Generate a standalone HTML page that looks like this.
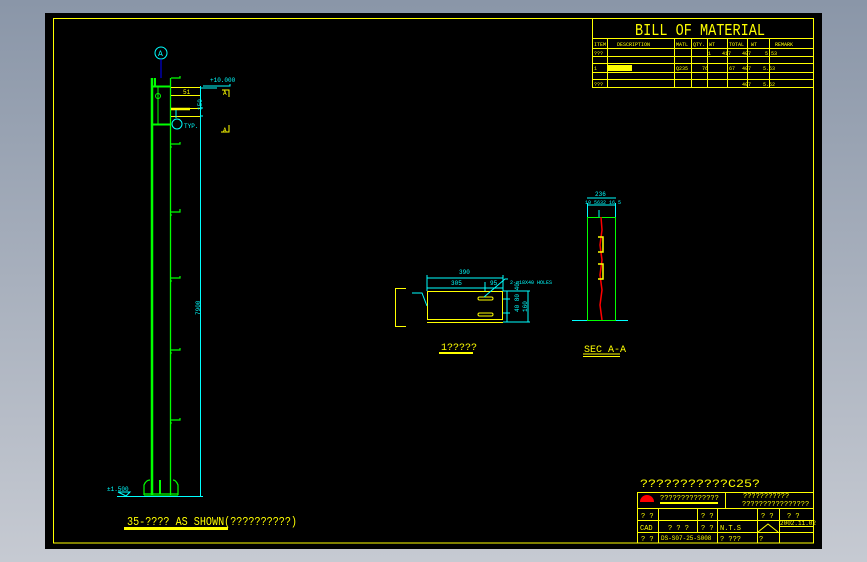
<!DOCTYPE html>
<html><head><meta charset="utf-8"><style>
html,body{margin:0;padding:0;width:867px;height:562px;overflow:hidden;background:linear-gradient(#8a96a8,#c6cad2);}
svg{position:absolute;left:0;top:0}
text{font-family:"Liberation Mono",monospace;}
</style></head><body>
<svg width="867" height="562" viewBox="0 0 867 562">
<rect x="45" y="13" width="777" height="536" fill="#000"/>
<rect x="53.5" y="18.5" width="760" height="524.5" fill="none" stroke="#ff0" stroke-width="1"/>

<!-- BOM -->
<g stroke="#ff0" stroke-width="1" fill="none">
<rect x="592.5" y="18.5" width="221" height="69"/>
<line x1="592" y1="38.5" x2="813" y2="38.5"/>
<line x1="592" y1="48.5" x2="813" y2="48.5"/>
<line x1="592" y1="56.5" x2="813" y2="56.5"/>
<line x1="592" y1="63.5" x2="813" y2="63.5"/>
<line x1="592" y1="72.5" x2="813" y2="72.5"/>
<line x1="592" y1="79.5" x2="813" y2="79.5"/>
<path d="M607.5 38V88M674.5 38V88M691.5 38V88M707.5 38V88M727.5 38V88M747.5 38V88M769.5 38V88"/>
</g>
<g fill="#ff0" font-size="5">
<text x="635" y="35" font-size="17" font-family="Liberation Sans" textLength="130" lengthAdjust="spacingAndGlyphs">BILL OF MATERIAL</text>
<text x="594" y="46">ITEM</text><text x="617" y="46">DESCRIPTION</text><text x="676" y="46">MATL</text><text x="693" y="46">QTY.</text>
<text x="709" y="46">WT</text><text x="729" y="46">TOTAL</text><text x="751" y="46">WT</text><text x="775" y="46">REMARK</text>
<text x="594" y="55">???</text><text x="708" y="55">1</text><text x="722" y="55">417</text><text x="742" y="55">407</text><text x="765" y="55">5.53</text>
<rect x="608" y="65" width="24" height="6"/>
<text x="594" y="70">1</text><text x="676" y="70">Q235</text><text x="702" y="70">76</text><text x="729" y="70">67</text><text x="742" y="70">407</text><text x="763" y="70">5.53</text>
<text x="594" y="86">???</text><text x="742" y="86">407</text><text x="763" y="86">5.52</text>
</g>

<!-- Column -->
<g fill="none">
<line x1="152" y1="78" x2="152" y2="495" stroke="#0f0" stroke-width="2.5"/>
<line x1="155" y1="78" x2="155" y2="86" stroke="#0f0" stroke-width="2"/>
<line x1="170.5" y1="78" x2="170.5" y2="495" stroke="#0f0" stroke-width="1.3"/>
<line x1="152" y1="86.5" x2="171" y2="86.5" stroke="#0f0" stroke-width="2"/>
<line x1="152" y1="124.5" x2="171" y2="124.5" stroke="#0f0" stroke-width="2"/>
<line x1="158" y1="86" x2="158" y2="124" stroke="#0f0" stroke-width="1"/>
<circle cx="158" cy="96" r="2.5" stroke="#0f0"/>
<path d="M171 78H180V76M171 144H180V142M171 212H180V209M171 278H180V276M171 350H180V348M171 420H180V418M171 146V148M171 214V216M171 280V282M171 352V354M171 422V424" stroke="#0f0" stroke-width="1.2"/>
<line x1="200.5" y1="86" x2="200.5" y2="497" stroke="#0ff" stroke-width="1"/>
<path d="M171 87.5H200M171 95.5H200M171 108.5H200M171 116.5H200" stroke="#ff0" stroke-width="1"/>
<line x1="171" y1="109" x2="190" y2="109" stroke="#ff0" stroke-width="2.5"/>
<path d="M200 88H217M200 108H203M200 116H203M203 86H230V84M176 110V118" stroke="#0ff" stroke-width="1"/>
<circle cx="161" cy="53" r="6" stroke="#0ff"/>
<line x1="161" y1="59" x2="161" y2="78" stroke="#00f" stroke-width="1"/>
<circle cx="177" cy="124" r="5" stroke="#0ff"/>
<path d="M222 90H229V97M224 132H229V125M221 132H227" stroke="#ff0"/>
<path d="M144 495V485Q146 480 150 480M178 495V485Q176 480 173 480M144 494H178M144 496H178" stroke="#0f0" stroke-width="1.2"/>
<line x1="160" y1="480" x2="160" y2="494" stroke="#0f0" stroke-width="2"/>
<path d="M117 496.5H203M118 492H130L126 496Z" stroke="#0ff" stroke-width="1"/>
</g>
<g fill="#0ff" font-size="6">
<text x="158" y="56" font-size="8">A</text>
<text x="210" y="82">+10.000</text>
<text x="184" y="128">TYP.</text>
<text x="107" y="491">±1.500</text>
<text x="200" y="315" transform="rotate(-90 200 315)">7900</text>
<text x="202" y="110" transform="rotate(-90 202 110)">150</text>
</g>
<g fill="#ff0" font-size="6"><text x="183" y="94">51</text><text x="223" y="95">A</text><text x="223" y="132">A</text></g>
<text x="127" y="525" fill="#ff0" font-size="12" font-family="Liberation Sans" textLength="170" lengthAdjust="spacingAndGlyphs">35-???? AS SHOWN(??????????)</text>
<rect x="124" y="527" width="104" height="3" fill="#ff0"/>

<!-- Plate detail -->
<g fill="none" stroke-width="1">
<path d="M406 288.5H395.5V326.5H406" stroke="#ff0"/>
<rect x="427.5" y="291.5" width="75" height="28" stroke="#ff0"/>
<line x1="427" y1="322.5" x2="503" y2="322.5" stroke="#ff0"/>
<rect x="478" y="297" width="15" height="3" rx="1.5" stroke="#ff0"/>
<rect x="478" y="313" width="15" height="3" rx="1.5" stroke="#ff0"/>
<path d="M427 275V291M503 275V291M427 278H503M427 288H503M485 282V291M503 291H530M503 299H510M503 313H510M503 322H530M507 291V322M528 291V322M412 293H422L427 306M484 297L505 279H508" stroke="#0ff"/>
<path d="M572 320.5H628M587.5 203V217M615.5 203V217M587 198H616M587 205H616M599 210V217" stroke="#0ff"/>
<rect x="587.5" y="217.5" width="28" height="103" stroke="#0f0"/>
<path d="M601 217L602 230L600 245L602 260L600 275L602 290L600 305L602 320" stroke="#f00" stroke-width="1.5"/>
<path d="M598 237H603V252H598M598 264H603V279H598" stroke="#ff0" stroke-width="1.5"/>
</g>
<g fill="#0ff" font-size="6">
<text x="459" y="274">390</text><text x="451" y="285">305</text><text x="490" y="285">95</text>
<text x="510" y="284" font-size="5">2-ø18X40 HOLES</text>
<text x="595" y="196">236</text><text x="585" y="204" font-size="5">10 5632 16 5</text>
<text x="519" y="312" transform="rotate(-90 519 312)">40 80 40</text>
<text x="527" y="312" transform="rotate(-90 527 312)">160</text>
</g>
<text x="441" y="350" fill="#ff0" font-size="10">1?????</text>
<rect x="439" y="352" width="34" height="2" fill="#ff0"/>
<text x="584" y="352" fill="#ff0" font-size="10">SEC A-A</text>
<path d="M583 354H620M583 356.5H620" stroke="#ff0"/>

<!-- Title block -->
<text x="640" y="487" fill="#ff0" font-size="11" textLength="120" lengthAdjust="spacingAndGlyphs">???????????C25?</text>
<g stroke="#ff0" fill="none" stroke-width="1">
<rect x="637.5" y="492.5" width="176" height="50.5"/>
<path d="M637 508.5H813M637 520.5H813M637 532.5H813M725.5 492V508M658.5 508V543M697.5 508V532M717.5 508V543M757.5 508V543M779.5 508V543M779 526.5H813M758 532L768 524L778 532"/>
</g>
<path d="M640 502A7 7 0 0 1 654 502Z" fill="#f00"/>
<g fill="#ff0" font-size="7">
<text x="660" y="500">??????????????</text>
<rect x="660" y="502" width="58" height="2"/>
<text x="743" y="498">???????????</text><text x="742" y="506">????????????????</text>
<text x="641" y="518">? ?</text><text x="701" y="518">? ?</text><text x="761" y="518">? ?</text><text x="787" y="518">? ?</text>
<text x="640" y="530">CAD</text><text x="668" y="530">? ? ?</text><text x="701" y="530">? ?</text><text x="720" y="530">N.T.S</text>
<text x="780" y="525" font-size="6">2002.11.02</text>
<text x="641" y="541">? ?</text><text x="661" y="540" font-size="6">DS-S07-25-S008</text><text x="720" y="541">?  ???</text><text x="759" y="541">?</text>
</g>
</svg>
</body></html>
